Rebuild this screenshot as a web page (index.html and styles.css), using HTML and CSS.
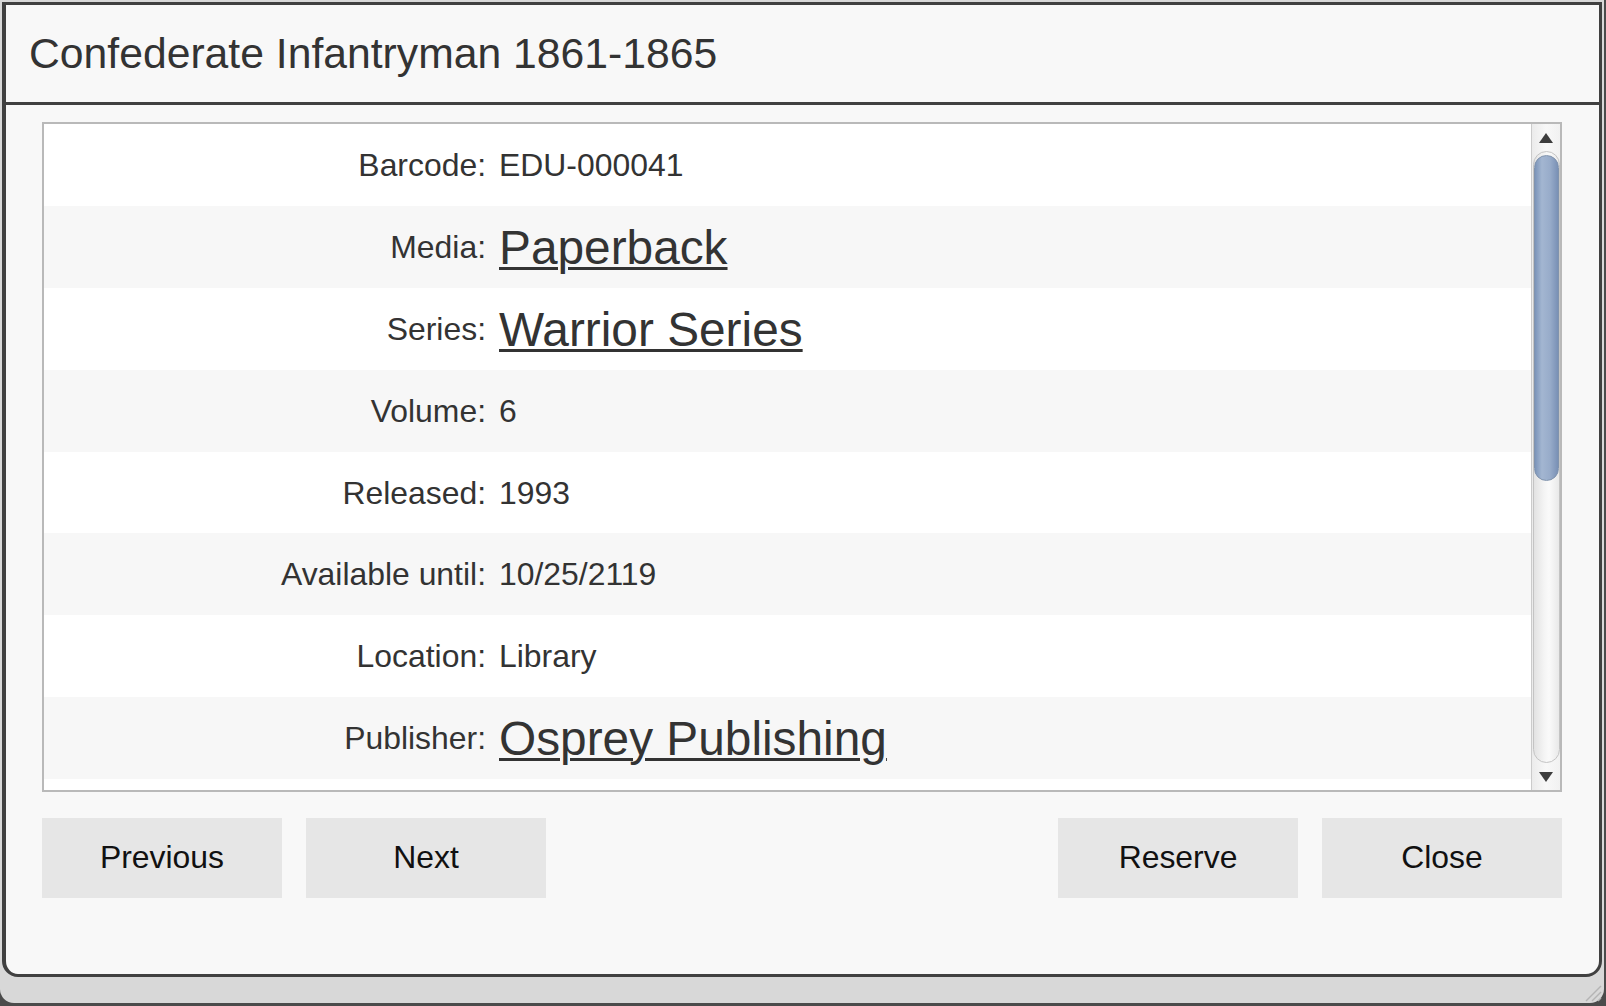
FILE: index.html
```html
<!DOCTYPE html>
<html lang="en">
<head>
<meta charset="utf-8">
<title>Confederate Infantryman 1861-1865</title>
<link rel="stylesheet" href="styles.css">
</head>
<body>
<div class="window">
  <div class="dialog">
    <div class="titlebar"><span class="title">Confederate Infantryman 1861-1865</span></div>
    <div class="content">
      <div class="details">
        <div class="rows">
          <div class="row"><div class="label">Barcode:</div><div class="value">EDU-000041</div></div>
          <div class="row"><div class="label">Media:</div><div class="value"><a class="link" href="#">Paperback</a></div></div>
          <div class="row"><div class="label">Series:</div><div class="value"><a class="link" href="#">Warrior Series</a></div></div>
          <div class="row"><div class="label">Volume:</div><div class="value">6</div></div>
          <div class="row"><div class="label">Released:</div><div class="value">1993</div></div>
          <div class="row"><div class="label">Available until:</div><div class="value">10/25/2119</div></div>
          <div class="row"><div class="label">Location:</div><div class="value">Library</div></div>
          <div class="row"><div class="label">Publisher:</div><div class="value"><a class="link" href="#">Osprey Publishing</a></div></div>
          <div class="row"></div>
        </div>
        <div class="scrollbar">
          <div class="arrow"><svg width="14" height="10" viewBox="0 0 14 10"><polygon points="7,0 14,10 0,10" fill="#3d3d3d"/></svg></div>
          <div class="track"><div class="thumb"></div></div>
          <div class="arrow"><svg width="14" height="10" viewBox="0 0 14 10"><polygon points="0,0 14,0 7,10" fill="#3d3d3d"/></svg></div>
        </div>
      </div>
      <div class="buttons">
        <div class="group">
          <button class="btn" type="button">Previous</button>
          <button class="btn" type="button">Next</button>
        </div>
        <div class="group">
          <button class="btn" type="button">Reserve</button>
          <button class="btn" type="button">Close</button>
        </div>
      </div>
    </div>
  </div>
  <svg class="grip" width="20" height="20" viewBox="0 0 20 20">
    <line x1="19" y1="4" x2="4" y2="19" stroke="#b4b4b4" stroke-width="1.5"/>
    <line x1="19" y1="10" x2="10" y2="19" stroke="#b4b4b4" stroke-width="1.5"/>
    <line x1="19" y1="16" x2="16" y2="19" stroke="#b4b4b4" stroke-width="1.5"/>
  </svg>
</div>
</body>
</html>
```
FILE: styles.css
```css
* { box-sizing: border-box; }
html, body { margin: 0; padding: 0; }
body {
  width: 1606px;
  height: 1006px;
  overflow: hidden;
  background: #4b4b4b;
  font-family: "Liberation Sans", Arial, Helvetica, sans-serif;
}
.window {
  position: relative;
  width: 1604px;
  height: 1003px;
  padding: 2px 2px 0 2px;
  background: #d8d8d8;
  border-radius: 0 0 14px 14px;
}
.dialog {
  height: 975px;
  border-style: solid;
  border-color: #404040;
  border-width: 3px 3px 3px 4px;
  border-radius: 0 0 16px 16px;
  background: #f8f8f8;
  display: flex;
  flex-direction: column;
}
.titlebar {
  height: 100px;
  border-bottom: 3px solid #404040;
  display: flex;
  align-items: center;
  padding-left: 23px;
}
.title {
  font-size: 42.7px;
  color: #333;
}
.content {
  padding: 17px 37px 0 36px;
}
.details {
  display: flex;
  height: 670px;
  border: 2px solid #b9b9b9;
  background: #fff;
}
.rows {
  flex: 1;
  overflow: hidden;
}
.row {
  display: grid;
  grid-template-columns: 442px 1fr;
  align-items: center;
  height: 81.9px;
  color: #333;
  font-size: 31.9px;
  padding-top: 1px;
}
.row:nth-child(even) { background: #f7f7f7; }
.label { text-align: right; }
.value { padding-left: 13px; }
.link {
  font-size: 47.8px;
  color: #333;
  text-decoration: underline;
  text-decoration-thickness: 3px;
  text-underline-offset: 3px;
}
.scrollbar {
  width: 29px;
  border-left: 1px solid #cbcbcb;
  background: linear-gradient(to right, #ebebeb, #f8f8f8 50%, #f1f1f1);
  display: flex;
  flex-direction: column;
  align-items: center;
}
.arrow {
  height: 27px;
  width: 100%;
  display: flex;
  align-items: center;
  justify-content: center;
}
.arrow svg { display: block; }
.track {
  flex: 1;
  width: 27px;
  border: 1px solid #c4c4c4;
  border-radius: 14px;
  background: linear-gradient(to right, #e2e2e2, #f4f4f4 40%, #fafafa 60%, #e9e9e9);
  padding-top: 3px;
}
.thumb {
  height: 326px;
  border-radius: 13px;
  border: 1px solid #8093ad;
  background: linear-gradient(to right, #7b94b9, #a3b6d1 30%, #98acca 65%, #7990b5);
}
.buttons {
  display: flex;
  justify-content: space-between;
  margin-top: 26px;
}
.group {
  display: flex;
  gap: 24px;
}
.btn {
  width: 240px;
  height: 80px;
  padding: 0 0 2px;
  border: none;
  background: #e6e6e6;
  color: #111;
  font-family: "Liberation Sans", Arial, Helvetica, sans-serif;
  font-size: 31.9px;
}
.grip {
  position: absolute;
  right: 2px;
  bottom: 1px;
}
```
